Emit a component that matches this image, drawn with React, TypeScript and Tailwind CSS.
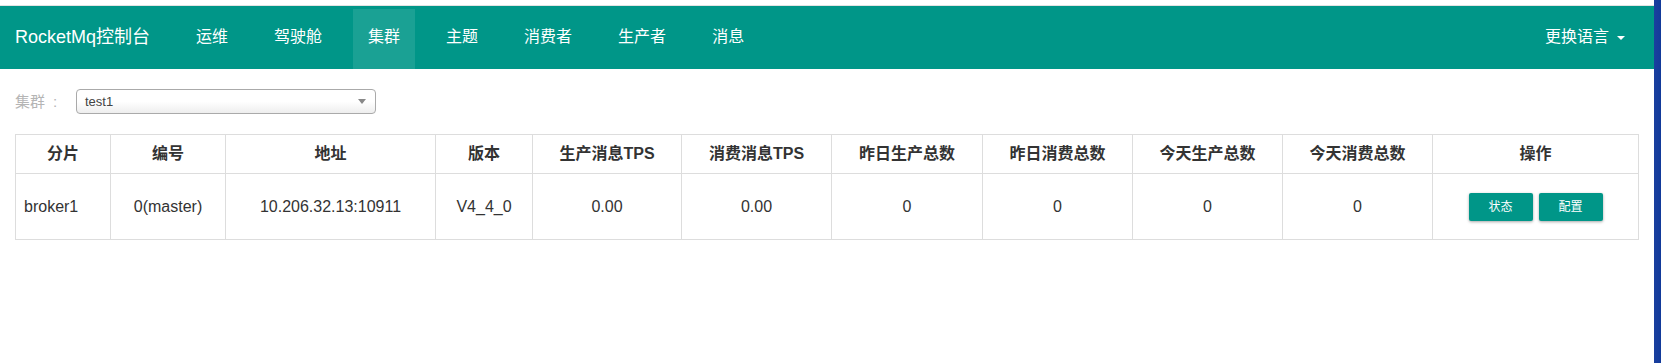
import React from "react";

const font = { fontFamily: '"Liberation Sans", "Noto Sans CJK SC", Arial, sans-serif' };

const navItems = ["运维", "驾驶舱", "集群", "主题", "消费者", "生产者", "消息"];

const headers = [
  { t: "分片", w: "w-[95px]" },
  { t: "编号", w: "w-[115px]" },
  { t: "地址", w: "w-[210px]" },
  { t: "版本", w: "w-[97px]" },
  { t: "生产消息TPS", w: "w-[149px]" },
  { t: "消费消息TPS", w: "w-[150px]" },
  { t: "昨日生产总数", w: "w-[151px]" },
  { t: "昨日消费总数", w: "w-[150px]" },
  { t: "今天生产总数", w: "w-[150px]" },
  { t: "今天消费总数", w: "w-[150px]" },
  { t: "操作", w: "w-[206px]" },
];

const row = ["0(master)", "10.206.32.13:10911", "V4_4_0", "0.00", "0.00", "0", "0", "0", "0"];

export default function App() {
  return (
    <div className="flex min-h-[363px] w-[1661px] bg-white" style={font}>
      <div className="flex-1 min-w-0">
        <div className="h-[5px] bg-white" />
        <nav className="flex h-[64px] items-end border-t border-[#e3e3e3] bg-[#009688] text-white">
          <div className="flex h-[60px] items-center gap-4">
            <div className="flex h-full items-center px-[15px] pb-[4px] text-[18px] leading-[20px]">RocketMq控制台</div>
            {navItems.map((n) => (
              <div
                key={n}
                className={
                  "flex h-full items-center px-[15px] pb-[4px] text-[16px] leading-[20px] " +
                  (n === "集群" ? "bg-[#1aa194]" : "")
                }
              >
                {n}
              </div>
            ))}
          </div>
          <div className="ml-auto mr-[14px] flex h-[60px] items-center px-[15px] pb-[4px] text-[16px] leading-[20px]">
            更换语言
            <span className="ml-[8px] mt-[2px] inline-block h-0 w-0 border-x-[4px] border-t-[4px] border-x-transparent border-t-white" />
          </div>
        </nav>

        <div className="px-[15px]">
          <div className="mt-[20px] flex items-center">
            <span className="flex w-[61px] text-[15px] leading-[20px] text-[#b5b5b5]">
              集群<span className="ml-[8px]">:</span>
            </span>
            <div className="flex h-[25px] w-[300px] items-center rounded-[4px] border border-[#aaa] bg-gradient-to-b from-white from-50% to-[#eee] px-[8px] shadow-[0_1px_0_#fff_inset]">
              <span className="text-[13px] leading-[16px] text-[#444]">test1</span>
              <span className="ml-auto mr-[1px] inline-block h-0 w-0 border-x-[4px] border-t-[5px] border-x-transparent border-t-[#888]" />
            </div>
          </div>

          <table className="mt-[20px] w-full table-fixed border-collapse text-[#333]">
            <colgroup>
              {headers.map((h) => (
                <col key={h.t} className={h.w} />
              ))}
            </colgroup>
            <thead>
              <tr className="h-[39px]">
                {headers.map((h) => (
                  <th key={h.t} className="border border-[#ddd] px-[8px] text-center align-middle text-[16px] font-bold leading-[22px]">
                    {h.t}
                  </th>
                ))}
              </tr>
            </thead>
            <tbody>
              <tr className="h-[66px]">
                <td className="border border-[#ddd] px-[8px] text-left align-middle text-[16px] leading-[22px]">broker1</td>
                {row.map((c, i) => (
                  <td key={i} className="border border-[#ddd] px-[8px] text-center align-middle text-[16px] leading-[22px]">
                    {c}
                  </td>
                ))}
                <td className="border border-[#ddd] px-[8px] align-middle">
                  <div className="flex justify-center gap-[6px]">
                    {["状态", "配置"].map((b) => (
                      <button
                        key={b}
                        className="flex h-[28px] w-[64px] items-center justify-center rounded-[2px] bg-[#009688] text-[12px] text-white shadow-[0_1px_3px_rgba(0,0,0,0.35)]"
                      >
                        {b}
                      </button>
                    ))}
                  </div>
                </td>
              </tr>
            </tbody>
          </table>
        </div>
      </div>
      <div className="w-[7px] shrink-0 bg-gradient-to-r from-[#1a3f9e] to-[#123a9a]" />
    </div>
  );
}
